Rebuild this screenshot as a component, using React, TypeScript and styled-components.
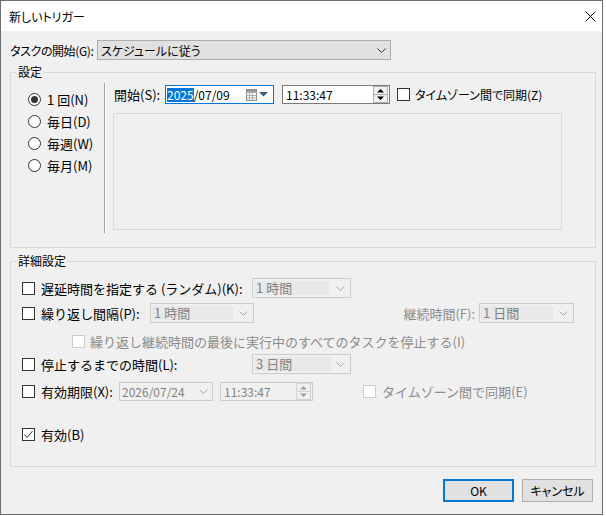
import React from "react";
import styled, { createGlobalStyle } from "styled-components";

const GlobalStyle = createGlobalStyle`
  html, body {
    margin: 0;
    background: #ffffff;
  }
  body {
    font-family: "Noto Sans CJK JP", "Noto Sans", sans-serif;
    color: #000000;
  }
  * {
    box-sizing: border-box;
  }
`;

const Window = styled.div`
  width: 603px;
  height: 515px;
  border: 1px solid #6e6e6e;
  background: #f0f0f0;
  display: flex;
  flex-direction: column;
`;

const TitleBar = styled.div`
  flex: none;
  height: 30px;
  background: #ffffff;
  display: flex;
  align-items: center;
  justify-content: space-between;
  padding: 0 6px 0 8px;
`;

const TitleText = styled.span`
  font-size: 12px;
  font-feature-settings: "palt";
`;

const Body = styled.div`
  display: flex;
  flex-direction: column;
  padding: 9px 6px 0 9px;
`;

const BeginRow = styled.div`
  display: flex;
  align-items: center;
  height: 20px;
`;

const BeginLabel = styled.span`
  flex: none;
  width: 87px;
  font-size: 12px;
  letter-spacing: -0.4px;
  white-space: nowrap;
  font-feature-settings: "palt";
`;

const Select = styled.div<{ $w: number }>`
  width: ${(p) => p.$w}px;
  height: 20px;
  background: #e1e1e1;
  border: 1px solid #adadad;
  display: flex;
  align-items: center;
  padding-left: 3px;
  font-size: 12px;
  font-feature-settings: "palt";
`;

const ArrowSlot = styled.span<{ $w: number }>`
  margin-left: auto;
  width: ${(p) => p.$w}px;
  height: 100%;
  display: flex;
  align-items: center;
  justify-content: center;
`;

const Group = styled.fieldset<{ $mt: number; $h: number }>`
  margin: ${(p) => p.$mt}px 0 0;
  padding: 0;
  min-width: 0;
  height: ${(p) => p.$h}px;
  border: 1px solid #d9d9d9;
`;

const Legend = styled.legend`
  margin-left: 5px;
  padding: 0 2px;
  font-size: 12px;
  line-height: 16px;
`;

const SettingsBody = styled.div`
  display: flex;
`;

const RecurrenceList = styled.div`
  width: 93px;
  padding: 8px 0 0 17px;
  display: flex;
  flex-direction: column;
`;

const RadioRow = styled.label`
  height: 22px;
  display: flex;
  align-items: center;
  gap: 6px;
  font-size: 13px;
`;

const Radio = styled.span<{ $checked?: boolean }>`
  width: 13px;
  height: 13px;
  border-radius: 50%;
  border: 1px solid #333333;
  background: #ffffff;
  display: flex;
  align-items: center;
  justify-content: center;

  &::after {
    content: "";
    width: 7px;
    height: 7px;
    border-radius: 50%;
    background: ${(p) => (p.$checked ? "#333333" : "transparent")};
  }
`;

const Divider = styled.div`
  width: 2px;
  height: 150px;
  margin-top: 3px;
  border-left: 1px solid #a0a0a0;
  border-right: 1px solid #ffffff;
`;

const ScheduleColumn = styled.div`
  flex: 1;
  padding: 5px 0 0 7px;
  display: flex;
  flex-direction: column;
`;

const StartLine = styled.div`
  display: flex;
  align-items: center;
  height: 19px;
`;

const StartLabel = styled.span`
  width: 52px;
  padding-left: 1px;
  font-size: 13px;
`;

const DateBox = styled.div`
  width: 109px;
  height: 19px;
  border: 1px solid #0078d7;
  background: #ffffff;
  display: flex;
  align-items: center;
  padding: 0 5px 0 1px;
  font-size: 12px;
`;

const Selected = styled.span`
  background: #0078d7;
  color: #ffffff;
  line-height: 14px;
`;

const PickerIcons = styled.span`
  margin-left: auto;
  display: flex;
  align-items: center;
  gap: 2px;
`;

const TimeBox = styled.div<{ $w: number; $ml: number; $disabled?: boolean }>`
  width: ${(p) => p.$w}px;
  height: 19px;
  margin-left: ${(p) => p.$ml}px;
  border: 1px solid ${(p) => (p.$disabled ? "#cccccc" : "#7a7a7a")};
  background: ${(p) => (p.$disabled ? "#f0f0f0" : "#ffffff")};
  color: ${(p) => (p.$disabled ? "#838383" : "#000000")};
  display: flex;
  align-items: center;
  padding: 0 1px 0 3px;
  font-size: 12px;
`;

const SpinSlot = styled.span`
  margin-left: auto;
  display: flex;
`;

const Box = styled.span<{ $disabled?: boolean; $ml?: number }>`
  flex: none;
  width: 13px;
  height: 13px;
  margin-left: ${(p) => p.$ml ?? 0}px;
  border: 1px solid ${(p) => (p.$disabled ? "#cccccc" : "#333333")};
  background: #ffffff;
  display: flex;
  align-items: center;
  justify-content: center;
`;

const SyncLabel = styled.span`
  margin-left: 5px;
  font-size: 12px;
  font-feature-settings: "palt";
`;

const EmptyPanel = styled.div`
  width: 449px;
  height: 117px;
  margin-top: 9px;
  border: 1px solid #d9d9d9;
`;

const DetailBody = styled.div`
  display: flex;
  flex-direction: column;
  padding: 9px 21px 0 11px;
`;

const Row = styled.div<{ $mt: number }>`
  display: flex;
  align-items: center;
  height: 20px;
  margin-top: ${(p) => p.$mt}px;
`;

const RowLabel = styled.span<{ $w?: number; $disabled?: boolean; $ml?: number }>`
  ${(p) => (p.$w ? `width: ${p.$w}px;` : "")}
  margin-left: ${(p) => p.$ml ?? 6}px;
  font-size: 13px;
  white-space: nowrap;
  color: ${(p) => (p.$disabled ? "#8c8c8c" : "#000000")};
`;

const PushRight = styled.span`
  margin-left: auto;
  margin-right: 4px;
  font-size: 13px;
  color: #8c8c8c;
`;

const Combo = styled.div<{ $w: number }>`
  width: ${(p) => p.$w}px;
  height: 20px;
  border: 1px solid #cccccc;
  background: #f0f0f0;
  display: flex;
  align-items: center;
  padding: 2px 0 2px 1px;
`;

const ComboValue = styled.span`
  flex: 1;
  height: 100%;
  background: #e8e8e8;
  color: #838383;
  font-size: 13px;
  line-height: 14px;
  padding-left: 2px;
`;

const DateField = styled.div<{ $w: number }>`
  width: ${(p) => p.$w}px;
  height: 19px;
  border: 1px solid #cccccc;
  background: #f0f0f0;
  color: #838383;
  display: flex;
  align-items: center;
  padding-left: 2px;
  font-size: 12px;
`;

const ButtonBar = styled.div`
  display: flex;
  justify-content: flex-end;
  gap: 8px;
  margin-top: 12px;
  padding-right: 3px;
`;

const Button = styled.button<{ $default?: boolean }>`
  width: 71px;
  height: 23px;
  padding: 0;
  background: #e1e1e1;
  border: ${(p) => (p.$default ? "2px solid #0078d7" : "1px solid #adadad")};
  font-family: inherit;
  font-size: 12px;
  font-feature-settings: "palt";
  color: #000000;
`;

function Chevron({ color }: { color: string }) {
  return (
    <svg width="9" height="5" viewBox="0 0 9 5">
      <polyline points="0.5,0.5 4.5,4.5 8.5,0.5" fill="none" stroke={color} strokeWidth="1" />
    </svg>
  );
}

function CalendarIcon() {
  return (
    <svg width="11" height="12" viewBox="0 0 11 12">
      <rect x="0.5" y="0.5" width="10" height="11" fill="#f6f6f6" stroke="#8c8c8c" />
      <path d="M0.5 3.5H10.5M0.5 6.5H10.5M0.5 9H10.5M3.5 3V11.5M6.5 3V11.5" stroke="#b0b0b0" />
      <rect x="1" y="1" width="9" height="2" fill="#9a9a9a" />
    </svg>
  );
}

function DropTriangle() {
  return (
    <svg width="9" height="5" viewBox="0 0 9 5">
      <polygon points="0,0 9,0 4.5,4.5" fill="#3d5a80" />
    </svg>
  );
}

function Spinner({ disabled }: { disabled?: boolean }) {
  const edge = disabled ? "#d4d4d4" : "#adadad";
  const arrow = disabled ? "#a0a0a0" : "#000000";
  return (
    <svg width="15" height="17" viewBox="0 0 15 17">
      <rect x="0.5" y="0.5" width="14" height="16" fill="#f0f0f0" stroke={edge} />
      <line x1="1" y1="8.5" x2="14" y2="8.5" stroke={edge} />
      <polygon points="4,6.5 11,6.5 7.5,3" fill={arrow} />
      <polygon points="4,10.5 11,10.5 7.5,14" fill={arrow} />
    </svg>
  );
}

function Check({ checked, disabled, ml }: { checked?: boolean; disabled?: boolean; ml?: number }) {
  return (
    <Box $disabled={disabled} $ml={ml}>
      {checked && (
        <svg width="11" height="11" viewBox="0 0 11 11">
          <polyline points="1.5,5.5 4,8.5 9.5,2" fill="none" stroke="#333333" strokeWidth="1" />
        </svg>
      )}
    </Box>
  );
}

function DisabledCombo({ width, value }: { width: number; value: string }) {
  return (
    <Combo $w={width}>
      <ComboValue>{value}</ComboValue>
      <ArrowSlot $w={20}>
        <Chevron color="#a8a8a8" />
      </ArrowSlot>
    </Combo>
  );
}

const recurrences = [
  { label: "1 回(N)", checked: true },
  { label: "毎日(D)" },
  { label: "毎週(W)" },
  { label: "毎月(M)" },
];

export default function App() {
  return (
    <>
      <GlobalStyle />
      <Window>
        <TitleBar>
          <TitleText>新しいトリガー</TitleText>
          <svg width="11" height="11" viewBox="0 0 11 11">
            <path d="M0.5 0.5L10.5 10.5M10.5 0.5L0.5 10.5" stroke="#000000" strokeWidth="1" />
          </svg>
        </TitleBar>
        <Body>
          <BeginRow>
            <BeginLabel>タスクの開始(G):</BeginLabel>
            <Select $w={294}>
              スケジュールに従う
              <ArrowSlot $w={18}>
                <Chevron color="#333333" />
              </ArrowSlot>
            </Select>
          </BeginRow>

          <Group $mt={4} $h={184}>
            <Legend>設定</Legend>
            <SettingsBody>
              <RecurrenceList>
                {recurrences.map((r) => (
                  <RadioRow key={r.label}>
                    <Radio $checked={r.checked} />
                    {r.label}
                  </RadioRow>
                ))}
              </RecurrenceList>
              <Divider />
              <ScheduleColumn>
                <StartLine>
                  <StartLabel>開始(S):</StartLabel>
                  <DateBox>
                    <Selected>2025</Selected>/07/09
                    <PickerIcons>
                      <CalendarIcon />
                      <DropTriangle />
                    </PickerIcons>
                  </DateBox>
                  <TimeBox $w={108} $ml={8}>
                    11:33:47
                    <SpinSlot>
                      <Spinner />
                    </SpinSlot>
                  </TimeBox>
                  <Check ml={7} />
                  <SyncLabel>タイムゾーン間で同期(Z)</SyncLabel>
                </StartLine>
                <EmptyPanel />
              </ScheduleColumn>
            </SettingsBody>
          </Group>

          <Group $mt={5} $h={214}>
            <Legend>詳細設定</Legend>
            <DetailBody>
              <Row $mt={0}>
                <Check />
                <RowLabel $w={211}>遅延時間を指定する (ランダム)(K):</RowLabel>
                <DisabledCombo width={99} value="1 時間" />
              </Row>
              <Row $mt={5}>
                <Check />
                <RowLabel $w={109}>繰り返し間隔(P):</RowLabel>
                <DisabledCombo width={104} value="1 時間" />
                <PushRight>継続時間(F):</PushRight>
                <DisabledCombo width={95} value="1 日間" />
              </Row>
              <Row $mt={8}>
                <Check disabled ml={50} />
                <RowLabel $disabled $ml={5}>
                  繰り返し継続時間の最後に実行中のすべてのタスクを停止する(I)
                </RowLabel>
              </Row>
              <Row $mt={3}>
                <Check />
                <RowLabel $w={211}>停止するまでの時間(L):</RowLabel>
                <DisabledCombo width={99} value="3 日間" />
              </Row>
              <Row $mt={7}>
                <Check />
                <RowLabel $w={78}>有効期限(X):</RowLabel>
                <DateField $w={94}>
                  2026/07/24
                  <ArrowSlot $w={17}>
                    <Chevron color="#a8a8a8" />
                  </ArrowSlot>
                </DateField>
                <TimeBox $w={93} $ml={7} $disabled>
                  11:33:47
                  <SpinSlot>
                    <Spinner disabled />
                  </SpinSlot>
                </TimeBox>
                <Check disabled ml={50} />
                <RowLabel $disabled>タイムゾーン間で同期(E)</RowLabel>
              </Row>
              <Row $mt={23}>
                <Check checked />
                <RowLabel>有効(B)</RowLabel>
              </Row>
            </DetailBody>
          </Group>

          <ButtonBar>
            <Button $default>OK</Button>
            <Button>キャンセル</Button>
          </ButtonBar>
        </Body>
      </Window>
    </>
  );
}
